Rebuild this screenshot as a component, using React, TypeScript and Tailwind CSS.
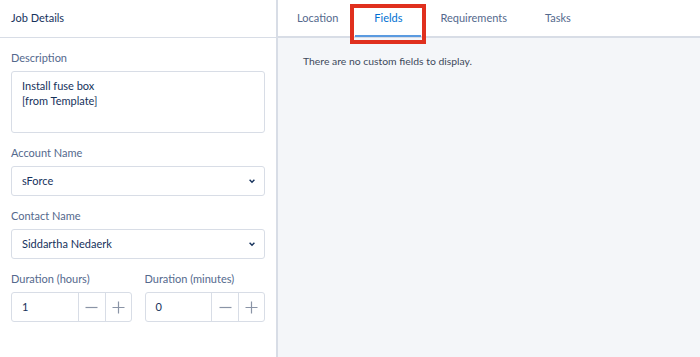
import React from "react";

const font = { fontFamily: 'Lato, "Liberation Sans", Arial, sans-serif' };

function Chevron() {
  return (
    <svg width="8" height="8" viewBox="0 0 10 10" className="text-[#16325c]">
      <path d="M2 3.5l3 3 3-3" fill="none" stroke="currentColor" strokeWidth="1.8" />
    </svg>
  );
}

function Label({ children }: { children: React.ReactNode }) {
  return <div className="text-[11px] text-[#54698d] mb-[6px] leading-[14px]">{children}</div>;
}

function Select({ value }: { value: string }) {
  return (
    <div className="h-[30px] flex items-center justify-between border border-[#d8dde6] rounded-[3px] bg-white pl-[10px] pr-[8px] text-[11px] text-[#16325c]">
      <span>{value}</span>
      <Chevron />
    </div>
  );
}

function Stepper({ value }: { value: string }) {
  return (
    <div className="h-[30px] flex border border-[#d8dde6] rounded-[3px] bg-white text-[11px] text-[#16325c]">
      <div className="flex-1 flex items-center pl-[10px]">{value}</div>
      <div className="w-[27px] flex items-center justify-center border-l border-[#d8dde6]">
        <svg width="13" height="13" viewBox="0 0 13 13">
          <path d="M0.5 6.5h12" stroke="#8a94a6" strokeWidth="1.2" />
        </svg>
      </div>
      <div className="w-[26px] flex items-center justify-center border-l border-[#d8dde6]">
        <svg width="13" height="13" viewBox="0 0 13 13">
          <path d="M0.5 6.5h12M6.5 0.5v12" stroke="#8a94a6" strokeWidth="1.2" />
        </svg>
      </div>
    </div>
  );
}

export default function App() {
  const tabs = ["Location", "Fields", "Requirements", "Tasks"];
  return (
    <div className="w-[700px] h-[357px] flex bg-white overflow-hidden" style={font}>
      <div className="w-[276px] shrink-0 flex flex-col">
        <div className="h-[38px] border-b border-[#d8dde6] flex items-center pl-[11px] text-[11px] text-[#16325c]">
          Job Details
        </div>
        <div className="px-[11px] pt-[13px] flex flex-col">
          <Label>Description</Label>
          <div className="h-[62px] border border-[#d8dde6] rounded-[3px] px-[10px] pt-[6px] text-[11px] leading-[15px] text-[#16325c]">
            <div>Install fuse box</div>
            <div>[from Template]</div>
          </div>
          <div className="mt-[13px]">
            <Label>Account Name</Label>
            <Select value="sForce" />
          </div>
          <div className="mt-[13px]">
            <Label>Contact Name</Label>
            <Select value="Siddartha Nedaerk" />
          </div>
          <div className="mt-[13px] flex gap-[13px]">
            <div className="flex-1">
              <Label>Duration (hours)</Label>
              <Stepper value="1" />
            </div>
            <div className="flex-1">
              <Label>Duration (minutes)</Label>
              <Stepper value="0" />
            </div>
          </div>
        </div>
      </div>
      <div className="w-[2px] bg-[#d8dde6]" />
      <div className="flex-1 flex flex-col bg-[#f4f6f9]">
        <div className="h-[38px] bg-white border-b-2 border-[#d8dde6] flex text-[11px] text-[#54698d]">
          {tabs.map((t) => {
            const active = t === "Fields";
            return (
              <div key={t} className="relative flex items-center">
                <div
                  className={`h-full flex items-center ${t === "Location" ? "pl-[19px] pr-[17px]" : "px-[19px]"} ${active ? "text-[#0070d2] border-b-2 border-[#5a9ae0] -mb-[2px] h-[40px]" : ""}`}
                >
                  {t}
                </div>
                {active && (
                  <div className="absolute left-[-5px] right-[-5px] top-[4px] h-[40px] border-[4px] border-[#e0301e] pointer-events-none" />
                )}
              </div>
            );
          })}
        </div>
        <div className="pl-[25px] pt-[16px] text-[10.4px] text-[#3e4a5c]">There are no custom fields to display.</div>
      </div>
    </div>
  );
}
